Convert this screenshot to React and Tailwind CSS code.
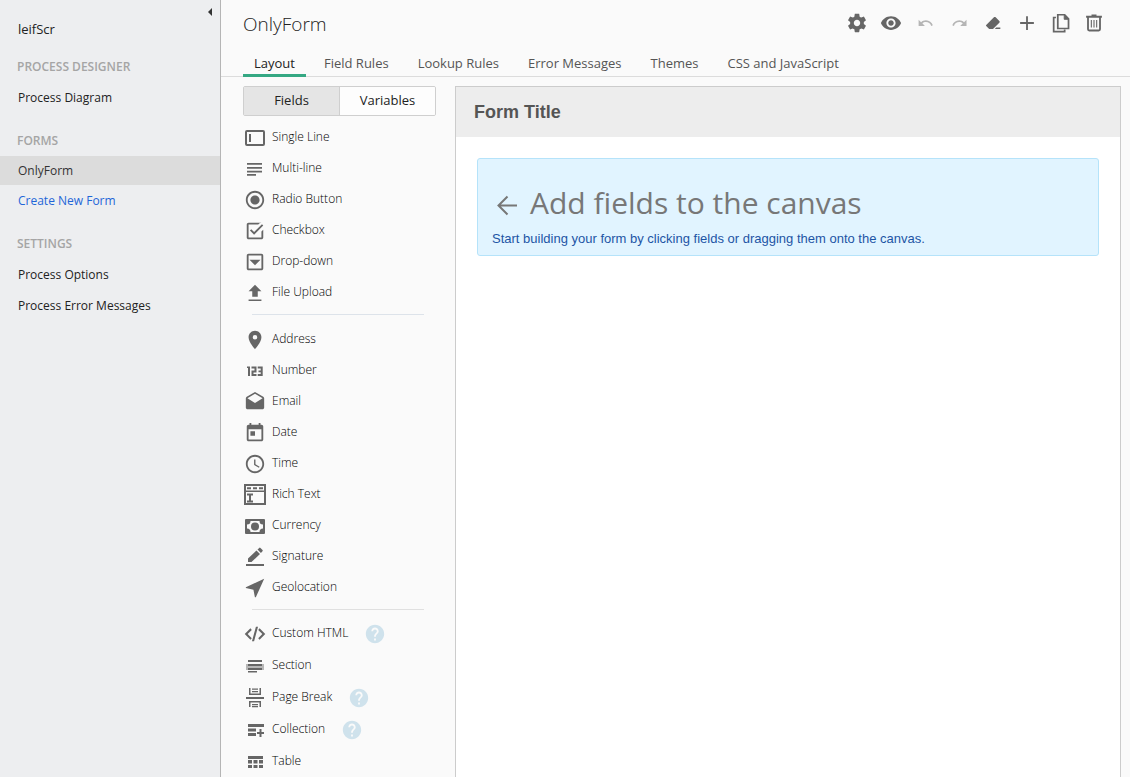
import React, { useState } from "react";

const Icon = ({ className = "", children }) => (
  <svg viewBox="0 0 24 24" width="22" height="22" fill="currentColor" aria-hidden="true" className={"shrink-0 " + className}>
    {children}
  </svg>
);

const GridIcon = ({ children }) => (
  <svg viewBox="0 0 22 22" width="22" height="22" fill="currentColor" aria-hidden="true" className="shrink-0">
    {children}
  </svg>
);

const icons = {
  singleLine: (
    <GridIcon>
      <rect x="2" y="4" width="18" height="14" rx="1" fill="none" stroke="currentColor" strokeWidth="2" />
      <path d="M5 7h2v8H5z" />
    </GridIcon>
  ),
  multiLine: (
    <GridIcon>
      <path d="M3 5h15v1.700H3zM3 9h15v1.700H3zM3 12.700h15v1.700H3zM3 16h9v1.700H3z" />
    </GridIcon>
  ),
  radio: (
    <Icon>
      <path d="M12 7c-2.760 0-5 2.240-5 5s2.240 5 5 5 5-2.240 5-5-2.240-5-5-5zm0-5C6.480 2 2 6.480 2 12s4.480 10 10 10 10-4.480 10-10S17.520 2 12 2zm0 18c-4.420 0-8-3.580-8-8s3.580-8 8-8 8 3.580 8 8-3.580 8-8 8z" />
    </Icon>
  ),
  checkbox: (
    <Icon>
      <path d="M19 3H5c-1.100 0-2 .9-2 2v14c0 1.100.9 2 2 2h14c1.100 0 2-.9 2-2v-8.500l-2 2V19H5V5h10.500l1.500-1.500zM7.910 10.080 6.500 11.500 11 16 21 6l-1.410-1.420L11 13.170z" />
    </Icon>
  ),
  dropdown: (
    <Icon>
      <path d="M19 3H5c-1.100 0-2 .9-2 2v14c0 1.100.9 2 2 2h14c1.100 0 2-.9 2-2V5c0-1.100-.9-2-2-2zm0 16H5V5h14z" />
      <path d="M6 9.500h12L12 15.500z" />
    </Icon>
  ),
  upload: (
    <Icon>
      <path d="M9 16h6v-6h4l-7-7-7 7h4zm-4 3h14v1.700H5z" />
    </Icon>
  ),
  address: (
    <Icon>
      <path d="M12 2C8.130 2 5 5.130 5 9c0 5.250 7 13 7 13s7-7.750 7-13c0-3.870-3.130-7-7-7zm0 9.500a2.500 2.500 0 1 1 0-5 2.500 2.500 0 0 1 0 5z" />
    </Icon>
  ),
  number: (
    <GridIcon>
      <path d="M3 6.500h3V16H4V8H3zM7.500 6.500H12.500v6H9.500V14h3v2h-5v-5.500h3v-2h-3zM13.700 6.500H18.700V16h-5v-2h3v-1.800h-2.200v-1.700h2.200V8.500h-3z" />
    </GridIcon>
  ),
  email: (
    <Icon>
      <path d="M21.990 8c0-.72-.37-1.350-.94-1.700L12 1 2.950 6.300C2.380 6.650 2 7.280 2 8v10c0 1.100.9 2 2 2h16c1.100 0 2-.9 2-2zM12 13 3.740 7.840 12 3l8.260 4.840z" />
    </Icon>
  ),
  date: (
    <Icon>
      <path d="M19 3h-1V1h-2v2H8V1H6v2H5c-1.110 0-1.990.9-1.990 2L3 19c0 1.100.89 2 2 2h14c1.100 0 2-.9 2-2V5c0-1.100-.9-2-2-2zm0 16H5V8h14zM7 10h5v5H7z" />
    </Icon>
  ),
  time: (
    <Icon>
      <path d="M11.990 2C6.470 2 2 6.480 2 12s4.470 10 9.990 10C17.520 22 22 17.520 22 12S17.520 2 11.990 2zM12 20c-4.420 0-8-3.580-8-8s3.580-8 8-8 8 3.580 8 8-3.580 8-8 8zm.5-13H11v6l5.250 3.150.75-1.230-4.500-2.670z" />
    </Icon>
  ),
  richText: (
    <GridIcon>
      <path fillRule="evenodd" d="M0 0h22v21H0zM2 2v4.500h18V2zM2 8v11h18V8z" />
      <path d="M3 3.300h4v2H3zM9 3.300h4v2H9zM15 3.300h4v2h-4zM3 9.500h6v2H7v5h2v2H3v-2h2v-5H3z" />
    </GridIcon>
  ),
  currency: (
    <GridIcon>
      <path fillRule="evenodd" d="M2 4h18a1 1 0 0 1 1 1v13a1 1 0 0 1-1 1H2a1 1 0 0 1-1-1V5a1 1 0 0 1 1-1zM6.500 6A3.500 3.500 0 0 1 3 9.500v4A3.500 3.500 0 0 1 6.500 17h9a3.500 3.500 0 0 1 3.500-3.500v-4A3.500 3.500 0 0 1 15.500 6z" />
      <circle cx="11" cy="11.500" r="4" />
    </GridIcon>
  ),
  signature: (
    <GridIcon>
      <path d="M4 16v-3.500L12.500 4.500l3.500 3.500L7.500 16zM13.500 3.500l1.700-1.600a1 1 0 0 1 1.300 0l2 2a1 1 0 0 1 0 1.300L16.900 7zM2 18h18v2H2z" />
    </GridIcon>
  ),
  geolocation: (
    <Icon>
      <path d="M22 2 2 11.200v.9l8.300 1.900 1.600 8h1z" />
    </Icon>
  ),
  html: (
    <Icon>
      <path d="M8.500 7.500 4 12l4.500 4.500L7 18.200.8 12 7 5.800zM15.500 7.500 20 12l-4.500 4.500 1.500 1.700 6.200-6.200L17 5.800zM13 4h2.300L11 20H8.700z" />
    </Icon>
  ),
  section: (
    <GridIcon>
      <path d="M2 9h18v6H2z" opacity="0.45" />
      <path d="M4 5h14v2H4zM4 9h14v2H4zM4 13h14v2H4zM4 16h9v1.500H4z" />
    </GridIcon>
  ),
  pageBreak: (
    <GridIcon>
      <path d="M2 10h18v2H2zM5 1h1.500v5.500h9V1H17v7H5zM8 1.500h6v1.300H8zM8 4h6v1.300H8zM5 14h12v6h-1.500v-4.500h-9V20H5zM8 17h6v1.200H8zM8 19h6v1.200H8z" />
    </GridIcon>
  ),
  collection: (
    <GridIcon>
      <path d="M4 5h16v3H4zM4 9.500h8v3H4zM4 14h8v3H4zM15.500 10h2v3H20v2h-2.500v3h-2v-3H13v-2h2.500z" />
    </GridIcon>
  ),
  table: (
    <GridIcon>
      <path d="M4 5h15v3H4zM4 9h4v3.500H4zM9.500 9h4v3.500h-4zM15 9h4v3.500h-4zM4 14h4v3H4zM9.500 14h4v3h-4zM15 14h4v3h-4z" />
    </GridIcon>
  ),
};

const basicFields = [
  ["Single Line", "singleLine"],
  ["Multi-line", "multiLine"],
  ["Radio Button", "radio"],
  ["Checkbox", "checkbox"],
  ["Drop-down", "dropdown"],
  ["File Upload", "upload"],
];
const richFields = [
  ["Address", "address"],
  ["Number", "number"],
  ["Email", "email"],
  ["Date", "date"],
  ["Time", "time"],
  ["Rich Text", "richText"],
  ["Currency", "currency"],
  ["Signature", "signature"],
  ["Geolocation", "geolocation"],
];
const layoutFields = [
  ["Custom HTML", "html", true],
  ["Section", "section"],
  ["Page Break", "pageBreak", true],
  ["Collection", "collection", true],
  ["Table", "table"],
];

const FieldGroup = ({ fields, rowClass, className = "" }) => (
  <ul className={className}>
    {fields.map(([label, icon, help]) => (
      <li key={label} className={"flex items-center " + rowClass}>
        <button type="button" className="flex h-full items-center gap-1.5 text-[#666]">
          <span className="mt-0.5">{icons[icon]}</span>
          <span className="text-[12px] font-light text-black">{label}</span>
        </button>
        {help && (
          <button type="button" aria-label={"Help for " + label} className="mt-0.5 ml-4 text-[#cfe2ec]">
            <Icon>
              <path d="M12 2C6.480 2 2 6.480 2 12s4.480 10 10 10 10-4.480 10-10S17.520 2 12 2zm1 17h-2v-2h2zm2.070-7.750-.9.920C13.450 12.900 13 13.500 13 15h-2v-.5c0-1.100.45-2.100 1.170-2.830l1.240-1.260c.37-.36.590-.86.590-1.410 0-1.100-.9-2-2-2s-2 .9-2 2H8c0-2.210 1.790-4 4-4s4 1.790 4 4c0 .88-.36 1.680-.93 2.250z" />
            </Icon>
          </button>
        )}
      </li>
    ))}
  </ul>
);

const NavHeading = ({ children }) => (
  <h2 className="flex h-[31px] items-center px-[17px] text-[12px] font-semibold text-[#a5a5a5]">{children}</h2>
);

const NavLink = ({ className = "h-[31px] text-[#222]", children }) => (
  <a href="#" className={"flex items-center px-[18px] text-[12px] font-medium " + className}>
    {children}
  </a>
);

const tools = [
  ["Settings", <path d="M19.430 12.980c.04-.32.07-.64.07-.98s-.03-.66-.07-.98l2.110-1.650c.19-.15.240-.42.120-.64l-2-3.460c-.12-.22-.39-.3-.61-.22l-2.490 1c-.52-.4-1.080-.73-1.690-.98l-.38-2.650C14.460 2.180 14.250 2 14 2h-4c-.25 0-.46.18-.49.42l-.38 2.650c-.61.25-1.170.59-1.690.98l-2.490-1c-.23-.09-.49 0-.61.22l-2 3.460c-.13.22-.07.49.120.64l2.110 1.650c-.04.32-.07.65-.07.98s.03.66.07.98l-2.110 1.650c-.19.15-.24.42-.12.64l2 3.460c.12.22.39.3.61.22l2.490-1c.52.4 1.080.73 1.690.98l.38 2.650c.03.24.24.42.49.42h4c.25 0 .46-.18.49-.42l.38-2.650c.61-.25 1.170-.59 1.690-.98l2.490 1c.23.09.49 0 .61-.22l2-3.460c.12-.22.07-.49-.12-.64zM12 15.500c-1.930 0-3.500-1.570-3.500-3.500s1.570-3.500 3.500-3.500 3.500 1.570 3.500 3.500-1.570 3.500-3.500 3.500z" />],
  ["Preview", <path d="M12 4.500C7 4.500 2.730 7.610 1 12c1.730 4.390 6 7.500 11 7.500s9.270-3.110 11-7.500c-1.730-4.390-6-7.500-11-7.500zM12 17c-2.760 0-5-2.240-5-5s2.240-5 5-5 5 2.240 5 5-2.240 5-5 5zm0-8c-1.660 0-3 1.340-3 3s1.340 3 3 3 3-1.340 3-3-1.340-3-3-3z" />],
  ["Undo", <path transform="translate(3.500 3) scale(.76)" d="M12.500 8c-2.650 0-5.050.99-6.900 2.600L2 7v9h9l-3.620-3.620c1.390-1.160 3.160-1.880 5.120-1.880 3.540 0 6.550 2.310 7.600 5.500l2.370-.78C21.080 11.030 17.150 8 12.500 8z" />, true],
  ["Redo", <path transform="translate(3.500 3) scale(.76)" d="M18.400 10.600C16.550 8.990 14.150 8 11.500 8c-4.650 0-8.580 3.030-9.960 7.220L3.900 16c1.050-3.190 4.050-5.500 7.600-5.500 1.950 0 3.730.72 5.120 1.880L13 16h9V7z" />, true],
  ["Clear", <path d="M4.600 14.200 13 5.800c.6-.6 1.300-.6 1.900 0l4 3.900c.6.600.6 1.300 0 1.900L12 18.500H7.800l-3.200-3.100c-.4-.4-.4-.8 0-1.200zM15.500 17H20v1.500h-6z" />],
  ["Add", <path d="M19.500 13H13v6.500h-2V13H4.500v-2H11V4.500h2V11h6.500z" />],
  ["Copy", <g fill="none" stroke="currentColor" strokeWidth="1.900"><path d="M8.500 3h7.500l4.200 4.500V18H8.500z" /><path d="M6.500 6H4v15.500h12V19" /><path d="M15.500 3.500V8H20z" fill="currentColor" strokeWidth="1" /></g>],
  ["Delete", <g fill="none" stroke="currentColor" strokeWidth="2.200"><path d="M2.500 4.500h19M9 3h6M4.800 5v14.500a1.500 1.500 0 0 0 1.500 1.500h11.400a1.500 1.500 0 0 0 1.500-1.500V5" /><path d="M8.800 8.500v9M12 8.500v9M15.200 8.500v9" strokeWidth="1.300" /></g>],
];

const tabs = ["Layout", "Field Rules", "Lookup Rules", "Error Messages", "Themes", "CSS and JavaScript"];

export default function App() {
  const [tab, setTab] = useState("Layout");
  return (
    <div className="flex h-screen overflow-hidden bg-[#fafafa] font-['Open_Sans',sans-serif]">
      <nav className="flex w-[221px] shrink-0 flex-col border-r border-[#b5b5b5] bg-[#edeef0]">
        <button type="button" aria-label="Collapse sidebar" className="mt-2 mr-2 self-end text-[#333]">
          <svg viewBox="0 0 4 8" width="4" height="8" fill="currentColor" aria-hidden="true">
            <path d="M4 0v8L0 4z" />
          </svg>
        </button>
        <p className="px-[18px] text-[13px] leading-[26px] font-medium text-[#222]">leifScr</p>
        <div className="mt-[9px]">
          <NavHeading>PROCESS DESIGNER</NavHeading>
          <NavLink>Process Diagram</NavLink>
        </div>
        <div className="mt-3">
          <NavHeading>FORMS</NavHeading>
          <NavLink className="h-[29px] bg-[#dcdcdc] text-[#333]">OnlyForm</NavLink>
          <NavLink className="h-[31px] text-[#1f66d8]">Create New Form</NavLink>
        </div>
        <div className="mt-3">
          <NavHeading>SETTINGS</NavHeading>
          <NavLink>Process Options</NavLink>
          <NavLink>Process Error Messages</NavLink>
        </div>
      </nav>

      <main className="flex min-w-0 flex-1 flex-col">
        <header className="border-b border-[#dcdcdc] pl-[22px]">
          <div className="flex h-12 items-center justify-between pr-[26px]">
            <h1 className="text-[19px] font-light text-[#222]">OnlyForm</h1>
            <div className="flex items-center gap-3 pb-0.5 text-[#666]">
              {tools.map(([label, path, disabled]) => (
                <button key={label} type="button" aria-label={label} disabled={disabled} className={disabled ? "text-[#b5b5b5]" : ""}>
                  <Icon className={label === "Delete" ? "w-5" : ""}>{path}</Icon>
                </button>
              ))}
            </div>
          </div>
          <div role="tablist" className="-mb-px flex gap-[7px]">
            {tabs.map((t) => (
              <button
                key={t}
                type="button"
                role="tab"
                aria-selected={t === tab}
                onClick={() => setTab(t)}
                className={
                  "h-[29px] border-b-3 px-[11px] pt-1.5 text-[13px] font-medium " +
                  (t === tab ? "border-[#35a883] text-[#222]" : "border-transparent text-[#555]")
                }
              >
                {t}
              </button>
            ))}
          </div>
        </header>

        <div className="flex min-h-0 flex-1 pt-[9px] pr-[9px] pl-[22px]">
          <aside className="w-[193px] shrink-0">
            <div className="flex h-[30px] overflow-hidden rounded-[2px] border border-[#cfcfcf] text-[13px] font-medium text-[#222]">
              <button type="button" className="flex-1 border-r border-[#cfcfcf] bg-[#e5e5e5]">Fields</button>
              <button type="button" className="flex-1 bg-[#fdfdfd]">Variables</button>
            </div>
            <div className="pt-[5px]">
              <FieldGroup fields={basicFields} rowClass="h-[31px]" className="pb-[7px] pl-px" />
              <hr className="mr-3 ml-[9px] border-[#dde3ea]" />
              <FieldGroup fields={richFields} rowClass="h-[31px]" className="pt-2 pb-[7px] pl-px" />
              <hr className="mr-3 ml-[9px] border-[#e0e0e0]" />
              <FieldGroup fields={layoutFields} rowClass="h-8" className="pt-[7px] pl-px" />
            </div>
          </aside>

          <section className="ml-[19px] min-w-0 flex-1 border border-b-0 border-[#ccc] bg-white">
            <div className="flex h-[50px] items-center bg-[#ededed] px-[18px]">
              <h2 className="font-['Liberation_Sans',sans-serif] text-[18px] font-bold text-[#555]">Form Title</h2>
            </div>
            <div className="mx-[21px] mt-[21px] h-[98px] rounded-[3px] border border-[#b5e3fa] bg-[#e1f4ff] px-[14px] pt-[22px]">
              <div className="flex items-center gap-[10px] text-[#777]">
                <svg viewBox="0 0 28 28" width="28" height="28" fill="none" stroke="currentColor" strokeWidth="2" aria-hidden="true">
                  <path d="M25 16.500H6.500M15.500 7.500 6.500 16.500l9 9" />
                </svg>
                <p className="text-[30px] leading-[44px]">Add fields to the canvas</p>
              </div>
              <p className="pt-1 font-['Liberation_Sans',sans-serif] text-[13px] leading-5 text-[#1d55a5]">
                Start building your form by clicking fields or dragging them onto the canvas.
              </p>
            </div>
          </section>
        </div>
      </main>
    </div>
  );
}
